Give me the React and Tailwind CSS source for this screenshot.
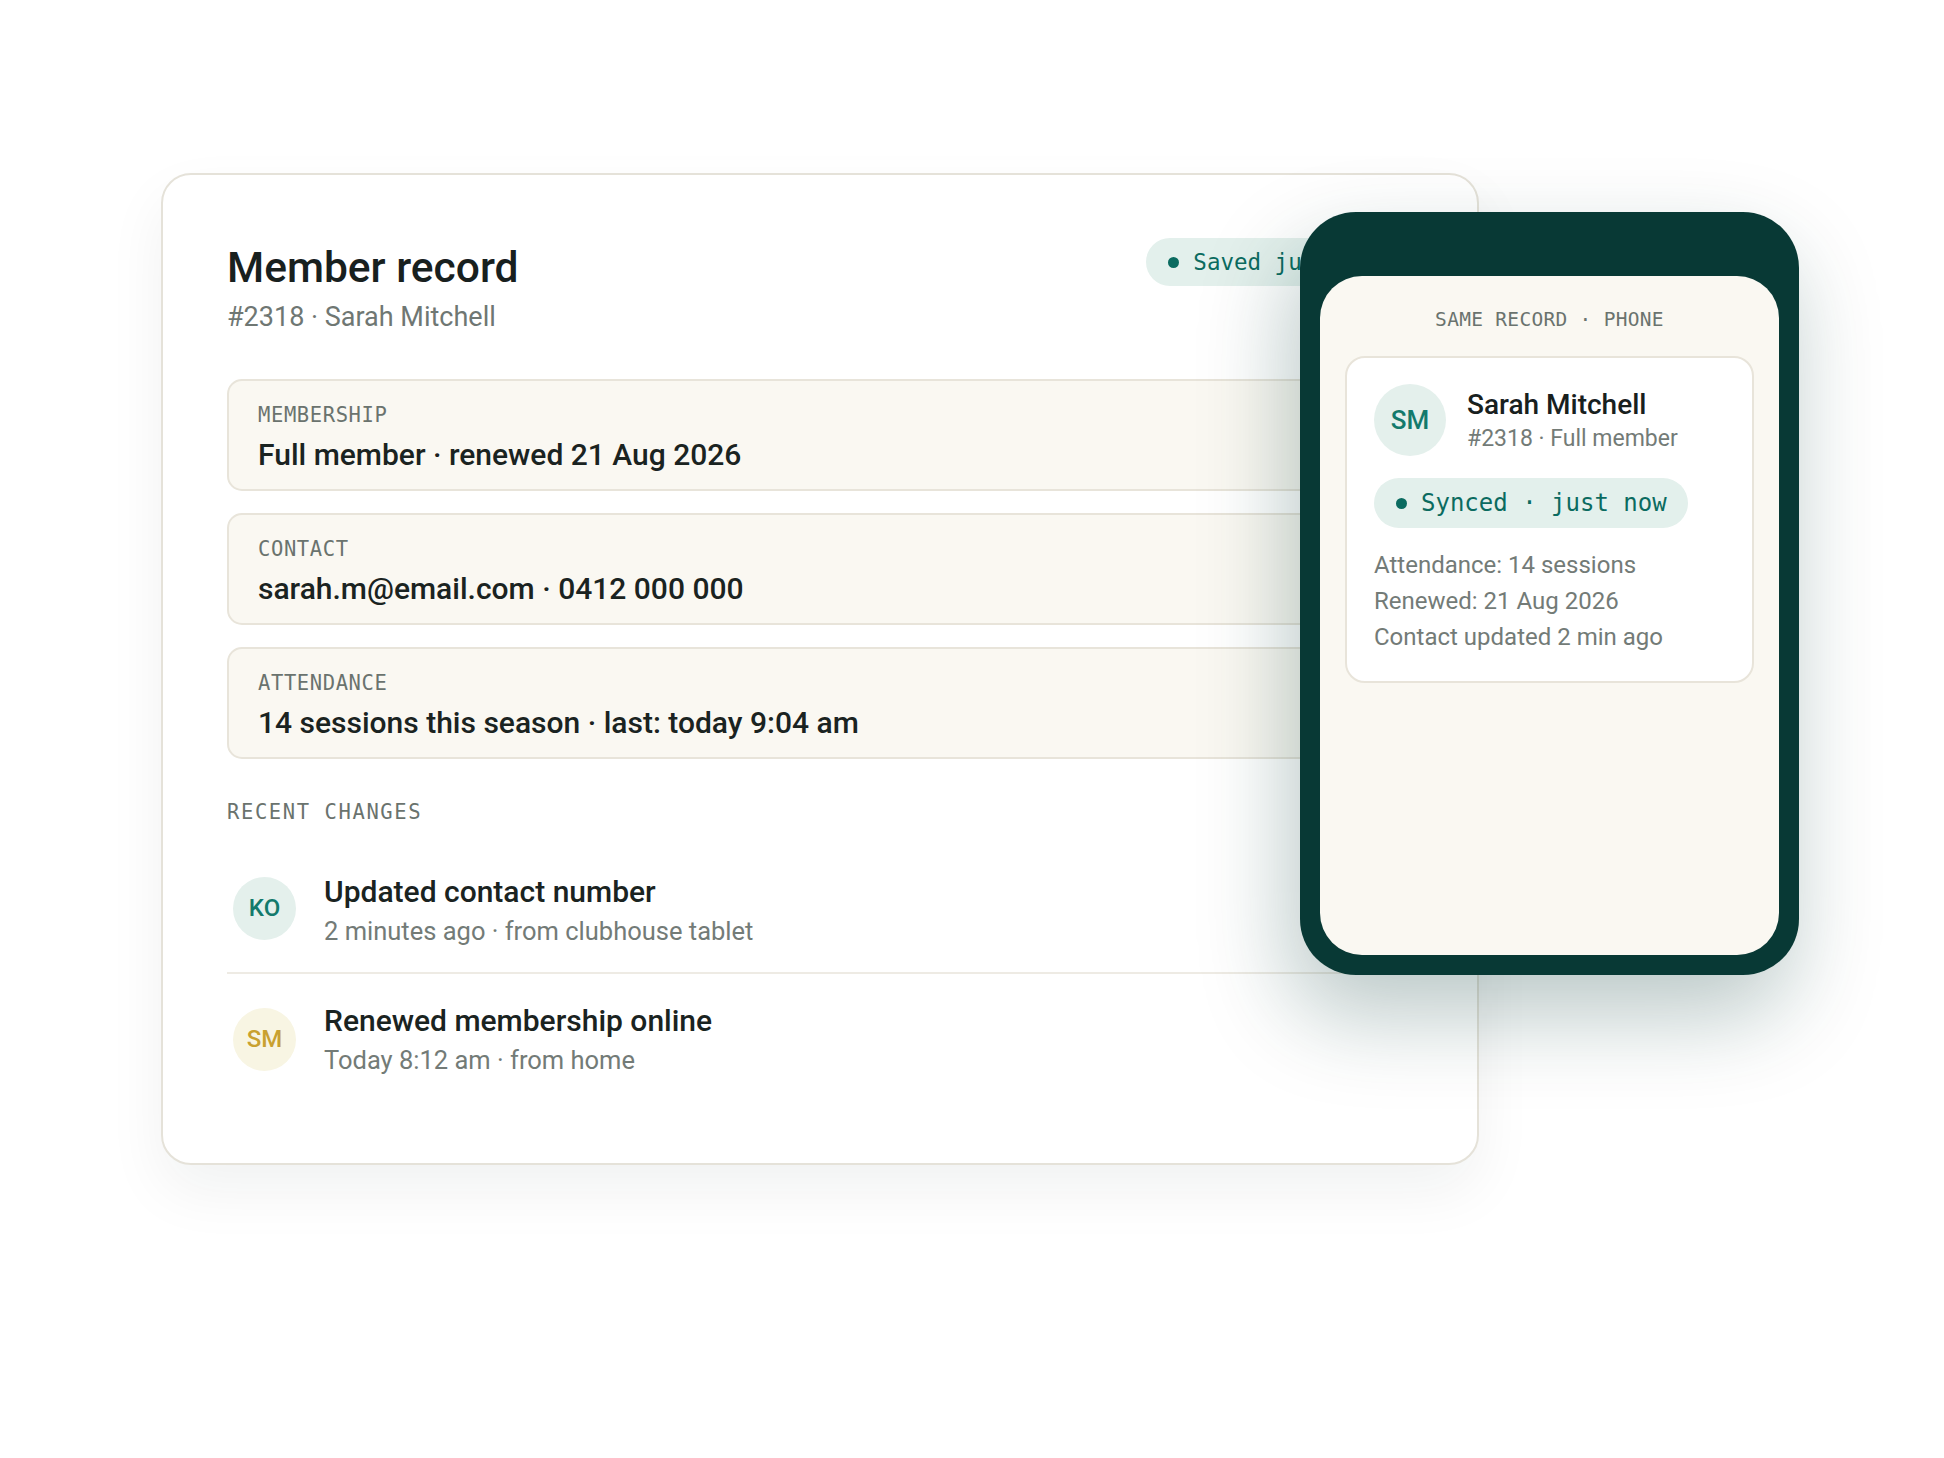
const sans = { fontFamily: "Roboto, 'Noto Sans', sans-serif" };
const mono = { fontFamily: "'DejaVu Sans Mono', 'Liberation Mono', monospace" };

function Field({ label, value }) {
  return (
    <div className="h-[112px] rounded-[15px] border-2 border-[#e8e4da] bg-[#faf8f2] px-[29px] pt-[5px] flex flex-col justify-center gap-[8px]">
      <div style={mono} className="text-[20.5px] leading-[25px] tracking-[0.6px] text-[#6a736e]">{label}</div>
      <div className="text-[30px] leading-[37px] font-medium text-[#1a2321]">{value}</div>
    </div>
  );
}

function Change({ initials, tone, title, sub, divider, shift }) {
  const av =
    tone === "teal"
      ? "bg-[#e4f0ec] text-[#137a6c]"
      : "bg-[#f8f5e3] text-[#c9a130]";
  return (
    <div className={"h-[130px] flex items-center pl-[6px] gap-[28px] -mr-[66px] " + (divider ? "border-b-2 border-[#eeebe4]" : "")}>
      <div className={"w-[63px] h-[63px] rounded-full flex items-center justify-center text-[24px] font-medium " + av}>
        {initials}
      </div>
      <div className={"flex flex-col " + shift}>
        <div className="text-[30px] leading-[37px] font-medium text-[#1a2321]">{title}</div>
        <div className="mt-[5px] text-[25.5px] leading-[33px] text-[#737b77]">{sub}</div>
      </div>
    </div>
  );
}

export default function App() {
  return (
    <div style={sans} className="relative w-[1944px] h-[1458px] bg-white overflow-hidden pt-[173px] pl-[161px]">
      {/* Main card */}
      <div className="w-[1318px] h-[992px] rounded-[30px] border-2 border-[#e5e2d9] bg-white px-[64px] pt-[66px] shadow-[0_26px_60px_rgba(20,40,35,0.06)]">
        <div className="flex items-start justify-between">
          <div>
            <h1 className="text-[42.5px] leading-[54px] font-medium text-[#18201e]">Member record</h1>
            <div className="mt-[5px] text-[27px] leading-[34px] text-[#6f7773]">#2318 · Sarah Mitchell</div>
          </div>
          <div className="mt-[-3px] h-[48px] rounded-full bg-[#e3f0ec] pl-[22px] pr-[30px] flex items-center gap-[14px]">
            <span className="w-[11px] h-[11px] rounded-full bg-[#0b6b60]" />
            <span style={mono} className="text-[22.5px] leading-[30px] text-[#0b6b60]">Saved just now</span>
          </div>
        </div>

        <div className="mt-[45px] flex flex-col gap-[22px]">
          <Field label="MEMBERSHIP" value="Full member · renewed 21 Aug 2026" />
          <Field label="CONTACT" value="sarah.m@email.com · 0412 000 000" />
          <Field label="ATTENDANCE" value="14 sessions this season · last: today 9:04 am" />
        </div>

        <div style={mono} className="mt-[41px] text-[20.5px] leading-[25px] tracking-[1.6px] text-[#6a736e]">RECENT CHANGES</div>
        <div className="mt-[19px]">
          <Change initials="KO" tone="teal" title="Updated contact number" sub="2 minutes ago · from clubhouse tablet" divider shift="pt-[4px]" />
          <Change initials="SM" tone="gold" title="Renewed membership online" sub="Today 8:12 am · from home" shift="pt-[0px]" />
        </div>
      </div>

      {/* Phone */}
      <div className="absolute left-[1300px] top-[212px] w-[499px] h-[763px] rounded-[56px] bg-[#083935] pt-[64px] px-[20px] pb-[20px] shadow-[-10px_40px_90px_rgba(8,57,53,0.28)]">
        <div className="h-full rounded-[42px] bg-[#faf8f2] px-[25px] pt-[32px] flex flex-col">
          <div style={mono} className="text-center text-[19.5px] leading-[24px] tracking-[0.3px] text-[#6a736e]">SAME RECORD · PHONE</div>
          <div className="mt-[24px] rounded-[20px] border-2 border-[#e8e4da] bg-white px-[27px] pt-[26px] pb-[26px]">
            <div className="flex items-center gap-[21px]">
              <div className="w-[72px] h-[72px] rounded-full bg-[#e4f0ec] text-[#137a6c] flex items-center justify-center text-[26px] font-medium">SM</div>
              <div className="flex flex-col pt-[2px]">
                <div className="text-[28px] leading-[34px] font-medium text-[#18201e]">Sarah Mitchell</div>
                <div className="mt-[2px] text-[23px] leading-[30px] text-[#737b77]">#2318 · Full member</div>
              </div>
            </div>
            <div className="mt-[22px] inline-flex h-[50px] rounded-full bg-[#e3f0ec] pl-[22px] pr-[21px] items-center gap-[14px]">
              <span className="w-[11px] h-[11px] rounded-full bg-[#0b6b60]" />
              <span style={mono} className="text-[24px] leading-[30px] text-[#0b6b60]">Synced · just now</span>
            </div>
            <div className="mt-[19px] text-[24px] leading-[36px] text-[#737b77]">
              <div>Attendance: 14 sessions</div>
              <div>Renewed: 21 Aug 2026</div>
              <div>Contact updated 2 min ago</div>
            </div>
          </div>
        </div>
      </div>
    </div>
  );
}
